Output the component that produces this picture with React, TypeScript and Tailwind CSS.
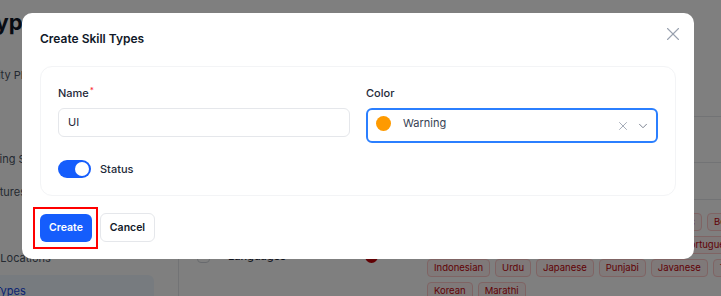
import { X, ChevronDown } from 'lucide-react';

const sideItems = [
  { label: 'Priority Plans', indent: 'pl-[43px]' },
  { label: 'Jobs', indent: 'pl-[40px]' },
  { label: 'HR', heading: true, indent: 'pl-[40px]' },
  { label: 'Mapping Skills', indent: 'pl-[40px]' },
  { label: 'Departures', indent: 'pl-[38px]' },
  { label: 'Roles', indent: 'pl-[40px]' },
  { label: 'Work Locations', indent: 'pl-[40px]' },
  { label: 'Skill Types', active: true, indent: 'pl-[40px]' },
];

const tagRows = [
  ['English', 'Tamil', 'Hindi', 'Greek', 'French', 'Arabic', 'Bengali'],
  ['Russian', 'German', 'Turkish', 'Swahili', 'Thai', 'Portuguese'],
  ['Indonesian', 'Urdu', 'Japanese', 'Punjabi', 'Javanese', 'Telugu'],
  ['Korean', 'Marathi'],
];

const Tag = ({ label }: { label: string }) => (
  <span className="h-[18px] shrink-0 px-[6px] flex items-center rounded border border-red-200 bg-red-50 text-[9.5px] text-red-700">
    {label}
  </span>
);

const BackgroundPage = () => (
  <div className="-ml-[70px] w-[800px] flex flex-col">
    {/* Header */}
    <div className="h-[44px] pl-[2px] pt-[6px]">
      <h1 className="text-[22px] leading-[32px] font-bold text-gray-900">Skill Types</h1>
    </div>

    <div className="flex">
      {/* Sidebar */}
      <aside className="w-[249px] shrink-0 border-r border-gray-200 pt-[15px] pr-[24px]">
        {sideItems.map((item) =>
          item.heading ? (
            <div key={item.label} className={`h-[18px] text-[10px] text-gray-400 ${item.indent}`}>
              {item.label}
            </div>
          ) : (
            <div
              key={item.label}
              className={`h-[33px] flex items-center rounded-md text-[11px] ${item.indent} ${
                item.active ? 'bg-blue-50 text-blue-700' : 'text-gray-600'
              }`}
            >
              {item.label}
            </div>
          ),
        )}
      </aside>

      {/* Main */}
      <main className="flex-1 flex flex-col">
        <div className="h-[73px] border-b border-gray-200" />
        <div className="h-[46px] border-b border-gray-200" />
        <div className="h-[37px] border-b border-gray-200" />
        <div className="flex items-center py-[13px] pl-[18px]">
          <span className="w-[13px] h-[13px] rounded-sm border border-gray-300" />
          <span className="ml-[18px] w-[137px] text-[11px] font-medium text-gray-800">Languages</span>
          <span className="w-[13px] h-[13px] rounded-full bg-red-700" />
          <div className="ml-[49px] flex flex-col gap-[5px]">
            {tagRows.map((row, i) => (
              <div key={i} className="flex gap-[5px]">
                {row.map((t) => (
                  <Tag key={t} label={t} />
                ))}
              </div>
            ))}
          </div>
        </div>
      </main>
    </div>
  </div>
);

export default function App() {
  return (
    <div className="relative w-[721px] h-[296px] overflow-hidden bg-white font-['Inter',sans-serif]">
      <BackgroundPage />

      {/* Overlay */}
      <div className="absolute inset-0 bg-black/50" />

      {/* Dialog */}
      <div className="absolute left-[22px] top-[13px] w-[672px] rounded-[10px] bg-white px-[18px] pt-4 pb-[17px]">
        <button className="absolute right-[10px] top-[10px] text-gray-400">
          <X size={22} strokeWidth={1.2} />
        </button>

        <h2 className="text-[12px] leading-5 font-semibold text-gray-900">Create Skill Types</h2>

        <div className="mt-[17px] rounded-[12px] border border-gray-100 px-[17px] pt-[18px] pb-[17px]">
          <div className="grid grid-cols-2 gap-4">
            <div>
              <label className="block text-[11px] leading-4 font-medium text-gray-800">
                Name<sup className="text-red-500 text-[8px] ml-[1px]">*</sup>
              </label>
              <div className="mt-[7px] h-[29px] rounded-md border border-gray-200 px-[9px] flex items-center text-[11px] text-gray-800">
                UI
              </div>
            </div>
            <div>
              <label className="block text-[11px] leading-4 font-medium text-gray-800">Color</label>
              <div className="mt-[7px] h-[35px] rounded-md border-2 border-blue-500 pl-[8px] pr-[6px] flex items-center">
                <div className="flex items-center gap-3 mb-[5px] flex-1">
                  <span className="w-[15px] h-[15px] rounded-full bg-amber-500" />
                  <span className="text-[11px] text-gray-700">Warning</span>
                </div>
                <X size={14} strokeWidth={1.5} className="text-gray-400" />
                <ChevronDown size={14} strokeWidth={1.5} className="ml-[6px] text-gray-500" />
              </div>
            </div>
          </div>

          <div className="mt-[17px] flex items-center gap-[9px]">
            <span className="w-[33px] h-[18px] rounded-full bg-blue-600 flex items-center justify-end pr-[2px]">
              <span className="w-[14px] h-[14px] rounded-full bg-white" />
            </span>
            <span className="text-[11px] font-medium text-gray-800">Status</span>
          </div>
        </div>

        <div className="mt-[17px] flex items-center gap-2">
          <div className="relative">
            <button className="h-[28px] w-[52px] rounded-md bg-blue-600 text-white text-[10.5px] font-semibold">
              Create
            </button>
            <span className="absolute -left-[7px] -top-[6px] w-[65px] h-[42px] border-2 border-[#ff0000] pointer-events-none" />
          </div>
          <button className="h-[29px] w-[55px] rounded-md border border-gray-200 bg-white text-gray-900 text-[10.5px] font-semibold">
            Cancel
          </button>
        </div>
      </div>
    </div>
  );
}
